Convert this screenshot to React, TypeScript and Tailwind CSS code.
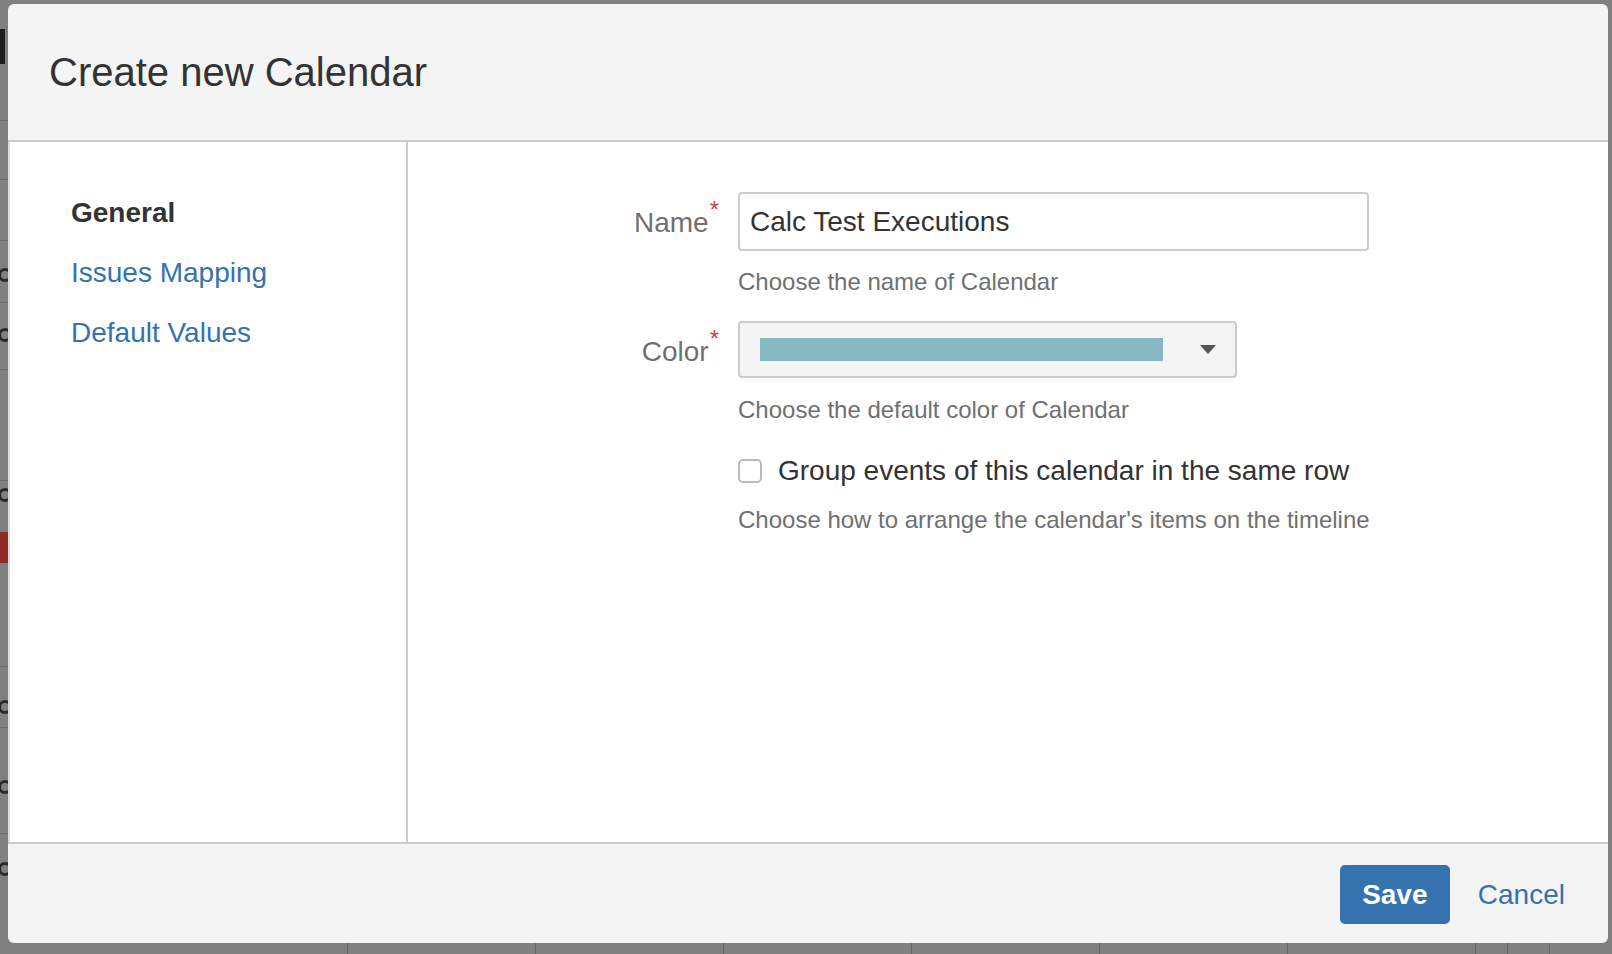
import { useState } from "react";

const leftLines = [120, 179, 240, 302, 369, 480, 666, 727, 833];
const bottomLines = [347, 535, 723, 911, 1099, 1287, 1475, 1507, 1549];
// cut-off letters of the page behind the overlay, drawn as small arcs
const leftArcs = [268, 328, 488, 700, 780, 862];

const App = () => {
  const [name, setName] = useState("Calc Test Executions");
  const [group, setGroup] = useState(false);

  return (
    <div className="relative h-[954px] w-[1612px] overflow-hidden bg-[#808080] pl-[8px] pt-[4px] font-['Liberation_Sans',Arial,sans-serif]">
      {/* page behind the overlay */}
      <div className="absolute left-0 top-[29px] h-[35px] w-[5px] bg-[#1e1e1e]" />
      <div className="absolute left-0 top-[532px] h-[31px] w-[8px] bg-[#8e2b25]" />
      {leftLines.map((y) => (
        <div key={y} className="absolute left-0 h-px w-[8px] bg-[#6c6c6c]" style={{ top: y }} />
      ))}
      {leftArcs.map((y) => (
        <div
          key={y}
          className="absolute left-[-2px] h-[14px] w-[14px] rounded-full border-[3px] border-[#2a2a2a]"
          style={{ top: y }}
        />
      ))}
      {bottomLines.map((x) => (
        <div key={x} className="absolute top-[943px] h-[11px] w-px bg-[#666]" style={{ left: x }} />
      ))}

      {/* dialog */}
      <div className="relative flex h-[939px] w-[1600px] flex-col overflow-hidden rounded-[6px] bg-[#f4f4f4]">
        <div className="flex h-[138px] items-center border-b-2 border-[#cccccc] pl-[41px]">
          <h2 className="text-[40px] leading-none text-[#333]">Create new Calendar</h2>
        </div>

        <div className="flex h-[700px] border-l-2 border-[#dddddd] bg-white">
          {/* left nav */}
          <div className="flex w-[398px] flex-col gap-[28px] border-r-2 border-[#cccccc] pl-[61px] pt-[55px] text-[28px] leading-[32px]">
            <p className="font-bold text-[#333]">General</p>
            <a href="#" className="text-[#3572b0]">Issues Mapping</a>
            <a href="#" className="text-[#3572b0]">Default Values</a>
          </div>

          {/* form */}
          <div className="flex-1 pt-[50px]">
            <div className="flex items-center">
              <label className="w-[311px] pt-[4px] text-right text-[28px] leading-[32px] text-[#707070]">
                Name
                <span className="relative -top-[14px] ml-[1px] text-[24px] text-[#d04437]">*</span>
              </label>
              <input
                value={name}
                onChange={(e) => setName(e.target.value)}
                className="ml-[19px] h-[59px] w-[631px] rounded-[4px] border-2 border-[#cccccc] bg-white px-[10px] text-[28px] text-[#333] outline-none"
              />
            </div>
            <p className="ml-[330px] mt-[17px] text-[24px] leading-[28px] text-[#707070]">
              Choose the name of Calendar
            </p>

            <div className="mt-[25px] flex items-center">
              <label className="w-[311px] pt-[5px] text-right text-[28px] leading-[32px] text-[#707070]">
                Color
                <span className="relative -top-[14px] ml-[1px] text-[24px] text-[#d04437]">*</span>
              </label>
              <div className="ml-[19px] flex h-[57px] w-[499px] items-center rounded-[4px] border-2 border-[#cccccc] bg-[#f4f4f4] pl-[20px]">
                <div className="h-[23px] w-[403px] bg-[#86b9c3]" />
                <svg className="ml-[37px]" width="16" height="9" viewBox="0 0 16 9">
                  <polygon points="0,0 16,0 8,9" fill="#555" />
                </svg>
              </div>
            </div>
            <p className="ml-[330px] mt-[18px] text-[24px] leading-[28px] text-[#707070]">
              Choose the default color of Calendar
            </p>

            <label className="ml-[330px] mt-[31px] flex items-center gap-[16px]">
              <input
                type="checkbox"
                checked={group}
                onChange={() => setGroup(!group)}
                className="h-[24px] w-[24px] appearance-none rounded-[5px] border-2 border-[#bbbbbb] bg-white"
              />
              <span className="text-[28px] leading-[32px] text-[#333]">
                Group events of this calendar in the same row
              </span>
            </label>
            <p className="ml-[330px] mt-[19px] text-[24px] leading-[28px] text-[#707070]">
              Choose how to arrange the calendar's items on the timeline
            </p>
          </div>
        </div>

        <div className="flex flex-1 items-center justify-end gap-[28px] border-t-2 border-[#cccccc] pr-[43px]">
          <button className="mt-[2px] h-[59px] w-[110px] rounded-[5px] bg-[#3572b0] text-[28px] font-bold text-white">
            Save
          </button>
          <a href="#" className="mt-[2px] text-[28px] text-[#3572b0]">Cancel</a>
        </div>
      </div>
    </div>
  );
};

export default App;
